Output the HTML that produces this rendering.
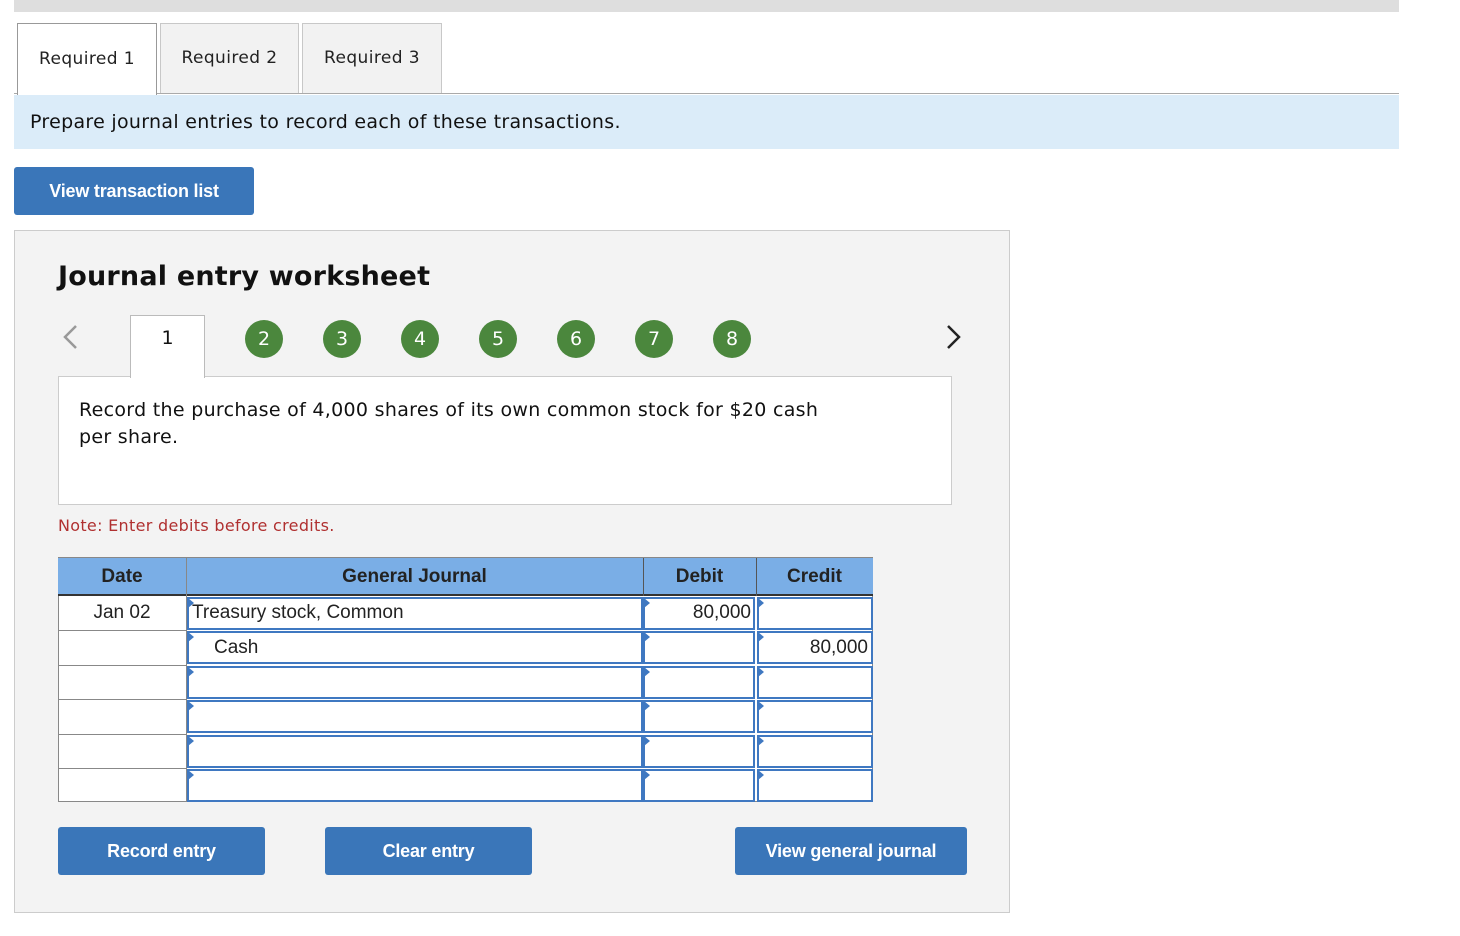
<!DOCTYPE html><html><head><style>
body{margin:0;width:1460px;height:936px;background:#fff;position:relative;font-family:"DejaVu Sans","Liberation Sans",sans-serif;overflow:hidden}
.a{position:absolute}
.tab{position:absolute;top:23px;height:70px;border:1px solid #c8c8c8;border-bottom:none;background:#f2f2f2;font-size:17px;letter-spacing:0.4px;color:#222;display:flex;align-items:center;justify-content:center;box-sizing:border-box;padding-bottom:2px}
.btn{position:absolute;background:#3a76b9;color:#fff;font-family:"Liberation Sans",Arial,sans-serif;font-weight:bold;font-size:18px;letter-spacing:-0.2px;display:flex;align-items:center;justify-content:center;border-radius:3px}
.c{position:absolute;top:320px;width:38px;height:38px;border-radius:50%;background:#4b873d;color:#fff;font-size:19px;display:flex;align-items:center;justify-content:center}
.t{font-family:"Liberation Sans",Arial,sans-serif;font-size:19px;color:#222}
.cell{position:absolute;border:2px solid #3f78c1;box-sizing:border-box;background:#fff}
.tri{position:absolute;width:0;height:0;border-top:5px solid transparent;border-bottom:5px solid transparent;border-left:6px solid #3f78c1}
</style></head><body>
<div class="a" style="left:14px;top:0;width:1385px;height:12px;background:#dedede"></div>
<div class="a" style="left:14px;top:93px;width:1385px;height:1px;background:#aaa"></div>
<div class="tab" style="left:17px;width:140px;background:#fff;border-color:#999;height:72px">Required 1</div>
<div class="tab" style="left:160px;width:139px">Required 2</div>
<div class="tab" style="left:302px;width:140px">Required 3</div>
<div class="a" style="left:14px;top:95px;width:1385px;height:54px;background:#dbecf9"></div>
<div class="a" style="left:30px;top:111px;font-size:19px;letter-spacing:0.3px;color:#111">Prepare journal entries to record each of these transactions.</div>
<div class="btn" style="left:14px;top:167px;width:240px;height:48px">View transaction list</div>
<div class="a" style="left:14px;top:230px;width:994px;height:681px;background:#f3f3f3;border:1px solid #ccc"></div>
<div class="a" style="left:58px;top:261px;font-size:27px;font-weight:bold;color:#111;letter-spacing:0.2px">Journal entry worksheet</div>
<svg class="a" style="left:60px;top:324px" width="20" height="28"><path d="M16 2 L5 13 L16 24" fill="none" stroke="#999" stroke-width="2.5"/></svg>
<svg class="a" style="left:944px;top:324px" width="20" height="28"><path d="M4 2 L15 13 L4 24" fill="none" stroke="#222" stroke-width="2.5"/></svg>
<div class="a" style="left:58px;top:376px;width:892px;height:127px;background:#fff;border:1px solid #ccc"></div>
<div class="a" style="left:130px;top:315px;width:75px;height:63px;background:#fff;border:1px solid #bbb;border-bottom:none;font-size:19px;display:flex;align-items:flex-start;justify-content:center;color:#111;box-sizing:border-box;padding-top:11px">1</div>
<div class="c" style="left:245px">2</div><div class="c" style="left:323px">3</div><div class="c" style="left:401px">4</div><div class="c" style="left:479px">5</div><div class="c" style="left:557px">6</div><div class="c" style="left:635px">7</div><div class="c" style="left:713px">8</div>
<div class="a" style="left:79px;top:397px;font-size:19px;letter-spacing:0.3px;line-height:27px;color:#111;width:760px">Record the purchase of 4,000 shares of its own common stock for $20 cash per share.</div>
<div class="a" style="left:58px;top:516px;font-size:16px;letter-spacing:0.3px;color:#b03030">Note: Enter debits before credits.</div>
<div class="a" style="left:58px;top:557px;width:815px;height:245px;background:#fff;border:1px solid #888;box-sizing:border-box"></div>
<div class="a t" style="left:58px;top:558px;width:815px;height:38px;background:#7aaee6;border-bottom:2px solid #333;box-sizing:border-box;font-weight:bold"></div>
<div class="a t" style="left:58px;top:566px;width:128px;text-align:center;font-weight:bold">Date</div>
<div class="a t" style="left:186px;top:566px;width:457px;text-align:center;font-weight:bold">General Journal</div>
<div class="a t" style="left:643px;top:566px;width:113px;text-align:center;font-weight:bold">Debit</div>
<div class="a t" style="left:756px;top:566px;width:117px;text-align:center;font-weight:bold">Credit</div>
<div class="a" style="left:186px;top:558px;width:1px;height:244px;background:#888"></div>
<div class="a" style="left:643px;top:558px;width:1px;height:38px;background:#555"></div>
<div class="a" style="left:756px;top:558px;width:1px;height:38px;background:#555"></div>
<div id="rows"></div>
<script>
var ys=[596,630,665,699,734,768],h='';
ys.forEach(function(y,i){
 if(i>0)h+='<div class="a" style="left:58px;top:'+y+'px;width:128px;height:1px;background:#888"></div>';
 h+='<div class="cell" style="left:187px;top:'+(y+1)+'px;width:456px;height:33px"></div>';
 h+='<div class="cell" style="left:643px;top:'+(y+1)+'px;width:112px;height:33px"></div>';
 h+='<div class="cell" style="left:757px;top:'+(y+1)+'px;width:116px;height:33px"></div>';
 [188,644,758].forEach(function(x){h+='<div class="tri" style="left:'+x+'px;top:'+(y+2)+'px"></div>';});
});
document.getElementById('rows').innerHTML=h;
</script>
<div class="a t" style="left:58px;top:602px;width:128px;text-align:center">Jan 02</div>
<div class="a t" style="left:192px;top:602px">Treasury stock, Common</div>
<div class="a t" style="left:643px;top:602px;width:108px;text-align:right">80,000</div>
<div class="a t" style="left:214px;top:637px">Cash</div>
<div class="a t" style="left:757px;top:637px;width:111px;text-align:right">80,000</div>
<div class="btn" style="left:58px;top:827px;width:207px;height:48px">Record entry</div>
<div class="btn" style="left:325px;top:827px;width:207px;height:48px">Clear entry</div>
<div class="btn" style="left:735px;top:827px;width:232px;height:48px">View general journal</div>
</body></html>
